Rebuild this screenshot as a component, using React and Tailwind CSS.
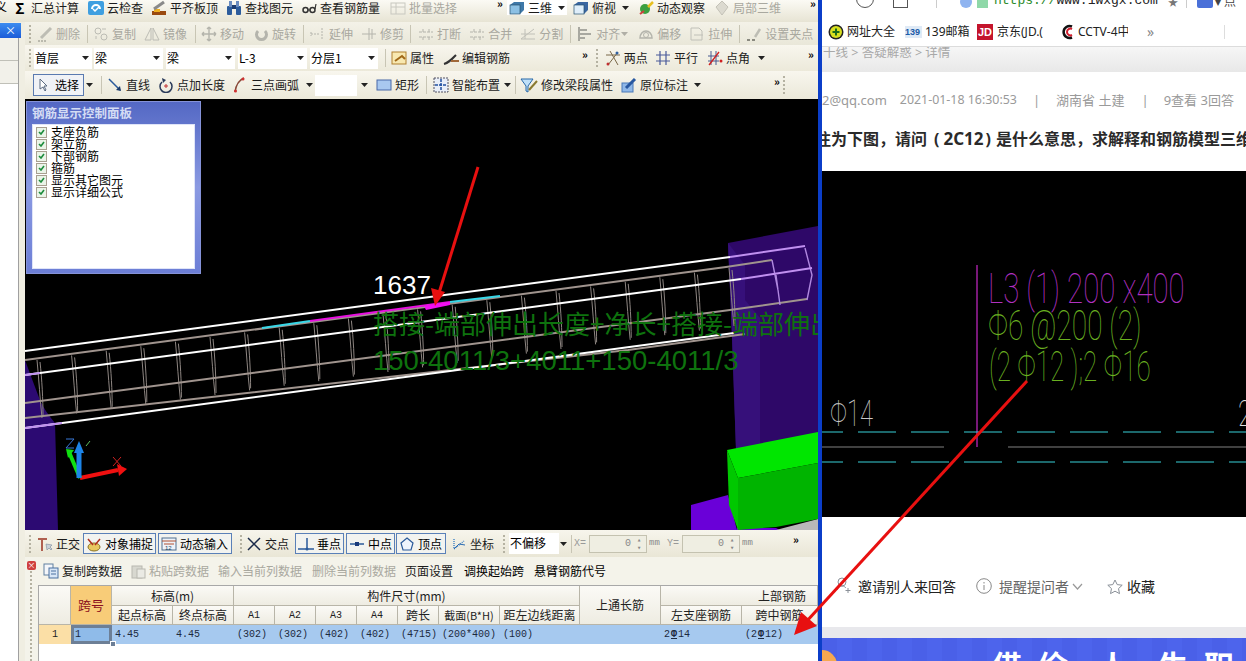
import React from "react";

const S = ({ children, w = 16, h = 16, v = "0 0 16 16" }) => (
  <svg width={w} height={h} viewBox={v} className="shrink-0" fill="none">{children}</svg>
);
const Caret = ({ c = "" }) => (
  <svg width="7" height="4" viewBox="0 0 7 4" className={"shrink-0 " + c}><path d="M0 0h7L3.5 4z" fill="#222" /></svg>
);
const Grip = ({ c = "" }) => (
  <div className={"w-[3px] h-[18px] shrink-0 border-l-2 border-dotted border-[#b5b2a2] " + c} />
);
const Sep = ({ c = "" }) => <div className={"w-px h-[18px] shrink-0 bg-[#c8c5b4] " + c} />;
const More = ({ c = "" }) => <span className={"shrink-0 font-bold text-[11px] leading-none tracking-[-1px] " + c}>»</span>;
const T = ({ i, t, c = "", off }) => (
  <div className={"flex items-center gap-[3px] shrink-0 " + (off ? "text-[#a9a89f] " : "text-[#1b1b1b] ") + c}>
    {i}
    <span className="leading-[16px] whitespace-nowrap">{t}</span>
  </div>
);
const Combo = ({ t, c = "" }) => (
  <div className={"h-[21px] bg-white flex items-center justify-between pl-[1px] pr-[3px] shrink-0 " + c}>
    <span>{t}</span><Caret />
  </div>
);

const G = "#8a8a80";
const Icons = {
  sum: <span className="w-[16px] text-center font-bold text-[15px] leading-[16px] text-black">Σ</span>,
  cloud: <S><rect x="0" y="1" width="16" height="14" rx="2" fill="#3f9fe0" /><path d="M4 9a3 3 0 0 1 8 0" stroke="#fff" strokeWidth="2" /><path d="M5 9l2 2 4-4" stroke="#fff" strokeWidth="1.5" /></S>,
  flat: <S><rect x="1" y="11" width="14" height="4" fill="#9a4a10" /><rect x="3" y="9" width="6" height="3" fill="#f0b020" /><path d="M3 9L13 2" stroke="#8a8a8a" strokeWidth="3" /></S>,
  bino: <S><rect x="1" y="6" width="5" height="9" rx="1" fill="#2c5c9c" /><rect x="10" y="6" width="5" height="9" rx="1" fill="#2c5c9c" /><rect x="3" y="1" width="3" height="6" fill="#6a8cc0" /><rect x="10" y="1" width="3" height="6" fill="#6a8cc0" /><rect x="6" y="5" width="4" height="4" fill="#1c3c70" /></S>,
  glass: <S><circle cx="4.5" cy="10" r="2.5" stroke="#333" strokeWidth="1.5" /><circle cx="11.5" cy="10" r="2.5" stroke="#333" strokeWidth="1.5" /><path d="M7 10h2M14 9l1-5" stroke="#333" strokeWidth="1.2" /></S>,
  batch: <S><rect x="1" y="3" width="14" height="11" stroke="#c8c8c0" /><path d="M1 7h14M6 3v11" stroke="#c8c8c0" /></S>,
  cube: <S><path d="M1 5l4-3h10v8l-4 4H1z" fill="#3e78a8" /><rect x="1" y="5" width="10" height="9" fill="#8cc0e4" stroke="#26506e" strokeWidth=".7" /></S>,
  top: <S><path d="M1 5l4-3h10v8l-4 4H1z" fill="#3a66a0" /><rect x="1" y="5" width="10" height="9" fill="#dfeefa" stroke="#26506e" strokeWidth=".7" /></S>,
  orbit: <S><circle cx="7" cy="9" r="5" fill="#3ca040" /><path d="M10 7l5-5" stroke="#e8c020" strokeWidth="2.5" /><path d="M2 14l4-3" stroke="#d04040" strokeWidth="2" /></S>,
  local: <S><path d="M8 1l6 6-6 8-6-8z" fill="#dcdad0" stroke="#c4c2b8" /></S>,
  del: <S><path d="M4 12L14 2" stroke="#bdbdb4" strokeWidth="3" /><path d="M1 15h8" stroke={G} strokeDasharray="2 1" /></S>,
  copy: <S><circle cx="5" cy="5" r="3" stroke="#bcbcb4" /><circle cx="11" cy="11" r="3" stroke="#bcbcb4" /><path d="M9 3h4M3 10v3" stroke="#bcbcb4" /></S>,
  mirror: <S><path d="M7 2L1 14h6zM9 2l6 12H9z" stroke="#bcbcb4" /></S>,
  move: <S><path d="M8 1v14M1 8h14M8 1l-2 2M8 1l2 2M8 15l-2-2M8 15l2-2M1 8l2-2M1 8l2 2M15 8l-2-2M15 8l-2 2" stroke="#b4b4ac" strokeWidth="1.4" /></S>,
  rot: <S><path d="M12 5a5 5 0 1 1-7 0" stroke="#b4b4ac" strokeWidth="3" /></S>,
  ext: <S><path d="M1 8h8M12 2v12M1 6v4" stroke="#b4b4ac" strokeDasharray="2 1" /></S>,
  trim: <S><path d="M1 8h14M8 2v12M11 3v10" stroke="#b4b4ac" /></S>,
  brk: <S><path d="M1 6h14M1 11h14M5 3v3M11 3v3M5 11v3M11 11v3" stroke="#b4b4ac" strokeDasharray="3 1" /></S>,
  split: <S><path d="M1 13L14 3M1 8h14M1 13h14M5 3v10" stroke="#c0c0b8" /></S>,
  align: <S><path d="M2 1v14M2 4h8M2 8h12M2 12h6" stroke="#a8a8a0" strokeWidth="2" /></S>,
  off2: <S><path d="M2 12a6 7 0 1 1 12 0z" stroke="#b4b4ac" strokeWidth="1.5" /><circle cx="8" cy="9" r="2.5" stroke="#b4b4ac" /></S>,
  str: <S><path d="M2 2h8l3 3v9H2z" stroke="#c0c0b8" /><path d="M5 9h9" stroke="#c0c0b8" /></S>,
  grip: <S><path d="M9 11l5-8" stroke="#bdbdb4" strokeWidth="2.5" /><path d="M1 14h3M6 14h3" stroke={G} strokeWidth="2" /></S>,
  prop: <S><rect x="1" y="2" width="14" height="12" fill="#f8e8b0" stroke="#b08030" /><path d="M4 11l7-5 3 3" stroke="#a06818" strokeWidth="2" /></S>,
  edit: <S><path d="M1 14c4-1 6-3 12-9" stroke="#333" strokeWidth="2" /><path d="M8 11h8" stroke="#a06838" strokeWidth="2" /></S>,
  two: <S><path d="M1 5l14 0M5 1l8 14M3 15L13 2" stroke="#7a6848" /><circle cx="12" cy="3" r="1.5" fill="#3060a0" /><circle cx="3" cy="14" r="1.5" fill="#c03030" /></S>,
  par: <S><path d="M1 5h14M1 11h14M5 1v14M11 1v14" stroke="#4a5a9a" strokeWidth="1.2" /></S>,
  ang: <S><path d="M1 6h11M1 11h11M4 1v14M9 1v14" stroke="#485a90" /><path d="M2 15L12 2" stroke="#d02020" strokeWidth="1.3" /><circle cx="14" cy="11" r="1.5" fill="#d02020" /></S>,
  sel: <S><path d="M4 2v10l3-2 2 4 1-1-2-4h3z" fill="#fff" stroke="#5a6a80" /></S>,
  line: <S><path d="M2 2l11 11" stroke="#2a5a9a" strokeWidth="1.5" /><path d="M14 14l-5-1 4-4z" fill="#1a3a6a" /></S>,
  addlen: <S><path d="M12 5a6 6 0 1 1-8 0" stroke="#2a3a5a" strokeWidth="1.5" /><path d="M4 1l4 2-3 3z" fill="#2a3a5a" /><path d="M8 7v4M6 9h4" stroke="#c03030" /></S>,
  arc: <S w={11} v="0 0 11 16"><path d="M1 15C2 8 5 3 10 1" stroke="#884838" strokeWidth="1.5" /><circle cx="1.5" cy="14" r="1.5" fill="#d03030" /><circle cx="9" cy="2" r="1.5" fill="#d03030" /></S>,
  rect: <S><rect x="1" y="3" width="14" height="10" fill="#a8c8f0" stroke="#4868a8" /></S>,
  smart: <S><rect x="1" y="1" width="14" height="14" fill="#e8eef8" stroke="#505060" strokeDasharray="2 1" /><path d="M8 2v12M2 8h12" stroke="#2050a0" strokeWidth="1.5" strokeDasharray="3 1" /></S>,
  modseg: <S w={18} v="0 0 18 16"><path d="M1 2h12L8 9v6l-2-1V9z" fill="#bfe0f8" stroke="#2868a8" /><path d="M9 13l8-9" stroke="#8a7a30" strokeWidth="2" /></S>,
  orig: <S><rect x="1" y="6" width="11" height="9" fill="#90b8e8" stroke="#4878b8" /><path d="M5 11l9-9" stroke="#2858a0" strokeWidth="3" /></S>,
  ortho: <S><path d="M1 3h9M5 3v12" stroke="#b06050" strokeWidth="2" /><path d="M9 8l1 6 2-2 2 2 1-1-2-2 2-2z" fill="#c8d0d8" stroke="#7a8a9a" strokeWidth=".6" /></S>,
  snap: <S><ellipse cx="8" cy="11" rx="6" ry="4" fill="#e8c860" stroke="#887020" /><path d="M2 3l5 6M14 3L9 9" stroke="#b03020" strokeWidth="1.5" /></S>,
  dyn: <S><rect x="1" y="2" width="14" height="12" fill="#eef2f8" stroke="#507090" /><path d="M1 5h14M3 8h10" stroke="#b05030" /><text x="4" y="14" fontSize="6" fill="#204060" fontFamily="Liberation Sans">12</text></S>,
  cross: <S><path d="M2 2l12 12M14 2L2 14" stroke="#1a2a4a" strokeWidth="1.5" /></S>,
  perp: <S><path d="M0 13h16M9 2v11" stroke="#2a5a9a" strokeWidth="1.5" /><circle cx="9" cy="13" r="1.5" fill="#2a5a9a" /></S>,
  mid: <S><path d="M1 8h14" stroke="#2a5a9a" strokeWidth="1.5" /><rect x="6" y="6" width="4" height="4" fill="#1a3a7a" /></S>,
  vert: <S><path d="M8 2l6 5-2 7H4L2 7z" stroke="#2a5a9a" strokeWidth="1.2" fill="#eef4fc" /></S>,
  coord: <S><path d="M3 3v10l10-8" stroke="#4888c8" strokeDasharray="1 1" strokeWidth="1.5" /><path d="M3 13l5-5 6 1" stroke="#2a6ab0" /></S>,
  copyd: <S><rect x="1" y="1" width="9" height="11" fill="#f4f6fa" stroke="#6080a0" /><rect x="6" y="5" width="9" height="10" fill="#d8e6f6" stroke="#4a70a0" /><path d="M8 8h5M8 11h5" stroke="#4a70a0" /></S>,
  paste: <S><rect x="2" y="3" width="10" height="12" fill="#d8d8d0" stroke="#b8b8b0" /><rect x="7" y="6" width="8" height="9" fill="#eaeae4" stroke="#b8b8b0" /></S>,
  none: <span className="w-[16px]" />,
};

const Dim = ({ c = "", children }) => <div className={"flex items-center justify-center border-r border-b border-[#b8b5a8] bg-gradient-to-b from-[#fbfaf6] to-[#eeece2] text-[#222] text-[12px] " + c}>{children}</div>;
const Cell = ({ c = "", children }) => <div className={"flex items-center pl-[3px] font-['Liberation_Mono','Noto_Sans_CJK_SC',monospace] text-[10px] text-[#1c2a40] bg-[#a6c9ef] whitespace-nowrap " + c}>{children}</div>;
const Phi = () => <span className="underline mx-[1px] font-bold">Φ</span>;

const stirrups = Array.from({ length: 21 }, (_, i) => {
  const x = 37 + 34.6 * i;
  const y = 360 - 4.6 * i;
  return `M${x} ${y}C${x + 2} ${y + 20} ${x + 3} ${y + 40} ${x + 5} ${y + 58}M${x + 3} ${y + 2}C${x + 5} ${y + 20} ${x + 6} ${y + 40} ${x + 6} ${y + 56}`;
});

function Canvas() {
  return (
    <svg viewBox="25 99 793 431" width="793" height="431" className="block absolute inset-0">
      <rect x="25" y="99" width="793" height="431" fill="#000" />
      <path d="M25 360Q36 390 40 400T55 423L58 530H25z" fill="#2c0a72" />
      <path d="M728 243L818 226V440L736 450L732 337z" fill="#2e0868" />
      <path d="M745 300L760 318L760 445L736 450L732 337L728 243L745 265z" fill="#36107a" />
      <path d="M691 505L728 495L737 530H691z" fill="#6a00d8" />
      <path d="M737 528L776 528L780 530H737z" fill="#6a00d8" />
      <path d="M776 530L818 519V530z" fill="#b8b8b8" />
      <path d="M727 450L818 432V463L738 478z" fill="#00e600" />
      <path d="M738 478L818 463V519L776 527L738 530z" fill="#00b400" />
      <path d="M727 450L738 478V530L729 505z" fill="#00c800" />
      <path d={stirrups.join("")} stroke="#8e8682" strokeWidth="1" fill="none" />
      <path d="M25 360L726 267L772 260M25 403L730 310L807 299M25 418L628 350L745 334" stroke="#a0948e" strokeWidth="2" fill="none" />
      <path d="M772 260L778 290M776 275L780 305M805 248L812 275L807 300" stroke="#b088e0" strokeWidth="1.4" fill="none" />
      <path d="M25 351L730 257" stroke="#fff" strokeWidth="2" />
      <path d="M730 257L805 246" stroke="#c090f0" strokeWidth="2" />
      <path d="M25 375L741 279" stroke="#fff" strokeWidth="2" />
      <path d="M741 279L812 268" stroke="#c090f0" strokeWidth="2" />
      <path d="M25 428L734 333" stroke="#fff" strokeWidth="2" />
      <path d="M25 375L40 373M25 428L62 423" stroke="#c090f0" strokeWidth="2" />
      <path d="M262 328L310 321M450 302L500 296" stroke="#38d8e8" strokeWidth="2" />
      <path d="M310 321L450 302" stroke="#e810e0" strokeWidth="2" />
      <path d="M424 306L450 302L450 305L426 310z" fill="#f010f0" />
      <path d="M80 478L118 470" stroke="#f01010" strokeWidth="4" />
      <path d="M117 464L127 469L119 476z" fill="#f01010" />
      <path d="M80 478L69 452" stroke="#10e010" strokeWidth="4" />
      <path d="M66 449L74 450L68 458z" fill="#10e010" />
      <path d="M79 478L79 450" stroke="#1c84e8" strokeWidth="5" />
      <path d="M79 441L84 453H74z" fill="#1c84e8" />
      <path d="M66 439H74L66 448H74" stroke="#3878d8" fill="none" />
      <path d="M113 457L121 466M121 457L113 466" stroke="#d02020" fill="none" />
      <path d="M86 446L90 441" stroke="#60c060" fill="none" />
    </svg>
  );
}

export default function App() {
  return (
    <div className="w-[1246px] h-[661px] flex overflow-hidden relative bg-white font-['Noto_Sans_CJK_SC','Noto_Sans',sans-serif] text-[12px]">
      {/* Left application */}
      <div className="w-[818px] shrink-0 flex flex-col bg-[#f0eee2]">
        <div className="h-[22px] shrink-0 flex items-start bg-gradient-to-b from-[#fbfaf4] to-[#e7e4d4] overflow-hidden">
          <span className="w-[12px] shrink-0 -ml-[5px] mr-[5px] leading-[14px]">义</span>
          <T i={Icons.sum} t="汇总计算" />
          <T i={Icons.cloud} t="云检查" c="ml-[9px]" />
          <T i={Icons.flat} t="平齐板顶" c="ml-[8px]" />
          <T i={Icons.bino} t="查找图元" c="ml-[8px]" />
          <T i={Icons.glass} t="查看钢筋量" c="ml-[8px]" />
          <T i={Icons.batch} t="批量选择" c="ml-[10px]" off />
          <More c="ml-[40px] mt-[-2px]" />
          <div className="ml-[5px] w-[60px] h-[15px] bg-white flex items-center pl-[2px] shrink-0">
            <T i={Icons.cube} t="三维" />
            <Caret c="ml-[6px]" />
          </div>
          <T i={Icons.top} t="俯视" c="ml-[6px]" />
          <Caret c="ml-[6px] mt-[6px]" />
          <T i={Icons.orbit} t="动态观察" c="ml-[9px]" />
          <T i={Icons.local} t="局部三维" c="ml-[9px]" off />
          <More c="ml-[29px] mt-[-2px]" />
        </div>
        <div className="flex flex-1 min-h-0">
          {/* Left side strip */}
          <div className="w-[25px] shrink-0 flex flex-col">
            <div className="h-[15px] mt-px w-[21px] bg-gradient-to-b from-[#3d8cf0] to-[#1c5cd8] text-white text-[11px] leading-[15px] text-right pr-[5px]">×</div>
            <div className="w-[19px] flex-1 bg-white border-r border-[#a0a0a0] flex flex-col">
              <div className="h-[23px] bg-[#f2f1ea] border-b border-[#c0c0b8]" />
              <div className="h-[23px] bg-[#f2f1ea] border-b border-[#c0c0b8]" />
            </div>
          </div>
          {/* Main */}
          <div className="w-[793px] flex flex-col">
            <div className="h-[23px] shrink-0 flex items-center bg-gradient-to-b from-[#f4f2e8] to-[#e9e7d9]">
              <Grip c="ml-[4px]" />
              <T i={Icons.del} t="删除" c="ml-[5px]" off />
              <Sep c="ml-[7px]" />
              <T i={Icons.copy} t="复制" c="ml-[5px]" off />
              <T i={Icons.mirror} t="镜像" c="ml-[8px]" off />
              <Sep c="ml-[8px]" />
              <T i={Icons.move} t="移动" c="ml-[5px]" off />
              <T i={Icons.rot} t="旋转" c="ml-[9px]" off />
              <Sep c="ml-[7px]" />
              <T i={Icons.ext} t="延伸" c="ml-[6px]" off />
              <T i={Icons.trim} t="修剪" c="ml-[8px]" off />
              <Sep c="ml-[6px]" />
              <T i={Icons.brk} t="打断" c="ml-[7px]" off />
              <T i={Icons.brk} t="合并" c="ml-[8px]" off />
              <T i={Icons.split} t="分割" c="ml-[8px]" off />
              <Sep c="ml-[7px]" />
              <T i={Icons.align} t="对齐" c="ml-[6px]" off />
              <Caret c="ml-px opacity-30" />
              <T i={Icons.off2} t="偏移" c="ml-[10px]" off />
              <T i={Icons.str} t="拉伸" c="ml-[8px]" off />
              <Sep c="ml-[7px]" />
              <T i={Icons.grip} t="设置夹点" c="ml-[6px]" off />
            </div>
            <div className="h-[26px] shrink-0 flex items-center bg-gradient-to-b from-[#f8f6ee] to-[#ece9da]">
              <Grip c="ml-[4px]" />
              <Combo t="首层" c="ml-[2px] w-[58px]" />
              <Combo t="梁" c="ml-[2px] w-[69px]" />
              <Combo t="梁" c="ml-[3px] w-[69px]" />
              <Combo t="L-3" c="ml-[3px] w-[69px]" />
              <Combo t="分层1" c="ml-[3px] w-[68px]" />
              <Sep c="ml-[7px]" />
              <T i={Icons.prop} t="属性" c="ml-[5px]" />
              <T i={Icons.edit} t="编辑钢筋" c="ml-[9px]" />
              <More c="ml-[72px] mt-[-8px]" />
              <Grip c="ml-[9px]" />
              <T i={Icons.two} t="两点" c="ml-[6px]" />
              <T i={Icons.par} t="平行" c="ml-[7px]" />
              <T i={Icons.ang} t="点角" c="ml-[9px]" />
              <Caret c="ml-[8px]" />
              <More c="ml-[43px] mt-[-8px]" />
            </div>
            <div className="h-[28px] shrink-0 flex items-center bg-gradient-to-b from-[#f8f6ee] to-[#ebe8d9]">
              <div className="ml-[8px] w-[51px] h-[22px] flex items-center gap-[3px] border border-[#5a7ab0] bg-[#f0f2f6] pl-[2px] shrink-0">
                {Icons.sel}<span>选择</span>
              </div>
              <Caret c="ml-[2px]" />
              <Sep c="ml-[8px]" />
              <T i={Icons.line} t="直线" c="ml-[5px]" />
              <T i={Icons.addlen} t="点加长度" c="ml-[8px]" />
              <T i={Icons.arc} t="三点画弧" c="ml-[9px] !gap-[6px]" />
              <Caret c="ml-[7px]" />
              <div className="ml-[2px] w-[42px] h-[21px] bg-white shrink-0" />
              <Caret c="ml-[4px]" />
              <T i={Icons.rect} t="矩形" c="ml-[8px]" />
              <Sep c="ml-[7px]" />
              <T i={Icons.smart} t="智能布置" c="ml-[6px]" />
              <Caret c="ml-[4px]" />
              <Sep c="ml-[4px]" />
              <T i={Icons.modseg} t="修改梁段属性" c="ml-[4px]" />
              <T i={Icons.orig} t="原位标注" c="ml-[8px]" />
              <Caret c="ml-[6px]" />
              <More c="ml-[73px] mt-[-8px]" />
              <Grip c="ml-[4px]" />
            </div>
            {/* 3D view */}
            <div className="h-[431px] shrink-0 relative overflow-hidden bg-black">
              <Canvas />
              <div className="absolute left-[1px] top-[2px] w-[175px] h-[173px] bg-gradient-to-b from-[#5468c4] via-[#8b9ae2] to-[#6c7ed6] border border-[#8592d8] px-[5px]">
                <div className="h-[22px] text-[12.5px] leading-[22px] font-bold text-[#d4dcf4] whitespace-nowrap">钢筋显示控制面板</div>
                <div className="h-[145px] bg-white border border-[#dfe4f8] pl-[3px] pt-[1px]">
                  {["支座负筋", "架立筋", "下部钢筋", "箍筋", "显示其它图元", "显示详细公式"].map((t) => (
                    <div key={t} className="h-[12px] flex items-center gap-[4px] text-black leading-[12px] whitespace-nowrap">
                      <span className="w-[11px] h-[11px] border border-[#a8a090] bg-[#eaf4e8] flex items-center justify-center shrink-0">
                        <svg width="7" height="6" viewBox="0 0 7 6"><path d="M1 3l2 2 3-4" stroke="#1c8c3c" strokeWidth="1.6" fill="none" /></svg>
                      </span>
                      <span>{t}</span>
                    </div>
                  ))}
                </div>
              </div>
              <div className="absolute left-[348px] top-[170px] text-[26px] leading-[32px] text-white font-['Liberation_Sans',sans-serif]">1637</div>
              <div className="absolute left-[348px] top-[204px] text-[26px] leading-[40px] text-[#0e720e] whitespace-nowrap">搭接-端部伸出长度+净长+搭接-端部伸出</div>
              <div className="absolute left-[348px] top-[242px] text-[27.500px] leading-[40px] text-[#0e720e] whitespace-nowrap font-['Liberation_Sans',sans-serif]">150-4011/3+4011+150-4011/3</div>
            </div>
            {/* Snap bar */}
            <div className="h-[27px] shrink-0 flex items-center bg-gradient-to-b from-[#f7f5ec] to-[#e9e6d6]">
              <Grip c="ml-[4px]" />
              <T i={Icons.ortho} t="正交" c="ml-[5px]" />
              <div className="ml-[3px] w-[73px] h-[21px] flex items-center gap-[3px] pl-[2px] border border-[#5a80b8] bg-[#f2f3f0] shrink-0">{Icons.snap}<span>对象捕捉</span></div>
              <div className="ml-[2px] w-[74px] h-[21px] flex items-center gap-[3px] pl-[2px] border border-[#5a80b8] bg-[#f2f3f0] shrink-0">{Icons.dyn}<span>动态输入</span></div>
              <Grip c="ml-[8px]" />
              <T i={Icons.cross} t="交点" c="ml-[3px]" />
              <div className="ml-[6px] w-[49px] h-[21px] flex items-center gap-[3px] pl-[2px] border border-[#5a80b8] bg-[#f2f3f0] shrink-0">{Icons.perp}<span>垂点</span></div>
              <div className="ml-[2px] w-[49px] h-[21px] flex items-center gap-[3px] pl-[2px] border border-[#5a80b8] bg-[#f2f3f0] shrink-0">{Icons.mid}<span>中点</span></div>
              <div className="ml-px w-[50px] h-[21px] flex items-center gap-[3px] pl-[2px] border border-[#5a80b8] bg-[#f2f3f0] shrink-0">{Icons.vert}<span>顶点</span></div>
              <T i={Icons.coord} t="坐标" c="ml-[5px]" />
              <Grip c="ml-[9px]" />
              <div className="ml-[3px] w-[50px] h-[21px] bg-white pl-px leading-[20px] shrink-0">不偏移</div>
              <Caret c="ml-px" />
              <Sep c="ml-[4px]" />
              <span className="ml-[2px] w-[14px] shrink-0 font-['Liberation_Mono',monospace] text-[10px] text-[#999]">X=</span>
              <div className="ml-px w-[58px] h-[18px] shrink-0 border border-[#c4c2b0] bg-[#efeee2] flex items-center justify-end pr-[3px] gap-[6px] font-['Liberation_Mono',monospace] text-[10px] text-[#888]">0<span className="text-[7px] leading-[8px] w-[6px]">▴<br />▾</span></div>
              <span className="ml-[2px] w-[16px] shrink-0 font-['Liberation_Mono',monospace] text-[9px] text-[#888]">mm</span>
              <span className="ml-[2px] w-[14px] shrink-0 font-['Liberation_Mono',monospace] text-[10px] text-[#999]">Y=</span>
              <div className="ml-px w-[58px] h-[18px] shrink-0 border border-[#c4c2b0] bg-[#efeee2] flex items-center justify-end pr-[3px] gap-[6px] font-['Liberation_Mono',monospace] text-[10px] text-[#888]">0<span className="text-[7px] leading-[8px] w-[6px]">▴<br />▾</span></div>
              <span className="ml-[2px] w-[16px] shrink-0 font-['Liberation_Mono',monospace] text-[9px] text-[#888]">mm</span>
              <More c="ml-[35px] mt-[-8px]" />
            </div>
            {/* Data panel */}
            <div className="flex-1 min-h-0 flex flex-col relative bg-[#f4f3ea]">
              <div className="absolute left-[2px] top-[4px] w-[9px] h-[9px] rounded-[2px] bg-[#d04040] text-white text-[8px] leading-[8px] text-center">×</div>
              <div className="absolute left-[5px] top-[14px] bottom-0 border-l-2 border-dotted border-[#b5b2a2]" />
              <div className="h-[28px] shrink-0 flex items-center">
                <T i={Icons.copyd} t="复制跨数据" c="ml-[18px]" />
                <T i={Icons.paste} t="粘贴跨数据" c="ml-[8px]" off />
                <T i={Icons.none} t="输入当前列数据" c="ml-[-10px]" off />
                <T i={Icons.none} t="删除当前列数据" c="ml-[-9px]" off />
                <T i={Icons.none} t="页面设置" c="ml-[-10px]" />
                <span className="ml-[11px] shrink-0">调换起始跨</span>
                <span className="ml-[10px] shrink-0">悬臂钢筋代号</span>
              </div>
              <div className="flex-1 ml-[13px] bg-white border-t border-l border-[#a8a8a8] overflow-hidden">
                <div className="grid relative grid-cols-[32px_41px_61px_61px_41px_41px_41px_41px_41px_61px_80px_81px_81px_76px] grid-rows-[20px_19px_19px]">
                  <Dim c="row-span-2" />
                  <Dim c="row-span-2 !bg-none !bg-[#f8cc78] !text-[#8c1020] text-[13px]">跨号</Dim>
                  <Dim c="col-span-2">标高(m)</Dim>
                  <Dim c="col-span-7">构件尺寸(mm)</Dim>
                  <Dim c="row-span-2">上通长筋</Dim>
                  <Dim c="col-span-2 !justify-end pr-[11px]">上部钢筋</Dim>
                  <Dim>起点标高</Dim>
                  <Dim>终点标高</Dim>
                  <Dim c="font-['Liberation_Mono',monospace] !text-[10px]">A1</Dim>
                  <Dim c="font-['Liberation_Mono',monospace] !text-[10px]">A2</Dim>
                  <Dim c="font-['Liberation_Mono',monospace] !text-[10px]">A3</Dim>
                  <Dim c="font-['Liberation_Mono',monospace] !text-[10px]">A4</Dim>
                  <Dim>跨长</Dim>
                  <Dim c="!text-[11px] whitespace-nowrap">截面(B*H)</Dim>
                  <Dim>距左边线距离</Dim>
                  <Dim>左支座钢筋</Dim>
                  <Dim>跨中钢筋</Dim>
                  <div className="bg-[#fbdfa6] flex items-center justify-center font-['Liberation_Mono',monospace] text-[10px] text-[#222]">1</div>
                  <div className="border-[3px] border-[#6d7f96] bg-[#8fbbe9] flex items-center pl-[1px] font-['Liberation_Mono',monospace] text-[10px] text-[#1c2a40]">1</div>
                  <Cell>4.45</Cell>
                  <Cell>4.45</Cell>
                  <Cell>(302)</Cell>
                  <Cell>(302)</Cell>
                  <Cell>(402)</Cell>
                  <Cell>(402)</Cell>
                  <Cell>(4715)</Cell>
                  <Cell>(200*400)</Cell>
                  <Cell>(100)</Cell>
                  <Cell />
                  <Cell>2<Phi />14</Cell>
                  <Cell>(2<Phi />12)</Cell>
                  <div className="absolute left-[71px] top-[55px] w-[4px] h-[4px] bg-[#6d7f96] border border-white box-content" />
                </div>
              </div>
            </div>
          </div>
        </div>
      </div>
      <div className="w-[4px] shrink-0 bg-[#0b3ec9]" />
      {/* Right browser */}
      <div className="w-[424px] shrink-0 flex flex-col overflow-hidden bg-white font-['Noto_Sans','Noto_Sans_CJK_SC',sans-serif]">
        <div className="h-[17px] shrink-0 flex items-end pb-[8px] overflow-hidden border-b border-transparent">
          <span className="ml-[34px] w-[18px] h-[18px] rounded-full border border-[#555] shrink-0" />
          <span className="ml-[19px] w-[15px] h-[15px] border border-[#555] shrink-0" />
          <span className="ml-[28px] w-px h-[15px] bg-[#ccc] shrink-0" />
          <span className="ml-[23px] w-[12px] h-[12px] rounded-full bg-[#8fb4f0] shrink-0" />
          <span className="ml-[5px] w-[11px] h-[12px] bg-[#8fd8a8] shrink-0" />
          <span className="ml-[6px] font-['Liberation_Mono',monospace] text-[13px] leading-[14px] whitespace-nowrap shrink-0 w-[164px] overflow-hidden"><span className="text-[#2a8a2a]">https://</span><span className="text-[#222]">www.1wxgx.com/(</span></span>
          <span className="ml-[10px] text-[#777] text-[10px] leading-[12px] shrink-0">★</span>
          <span className="ml-[8px] w-px h-[15px] bg-[#ccc] shrink-0" />
          <span className="ml-[10px] w-[16px] h-[10px] rounded-[2px] bg-[#4a70d8] shrink-0" />
          <span className="ml-[2px] shrink-0 text-[12px] leading-[12px] text-[#444]">▾ 点</span>
        </div>
        <div className="h-[30px] shrink-0 flex items-center border-b border-[#dcdcdc] text-[#222] text-[12px] whitespace-nowrap">
          <svg width="16" height="16" viewBox="0 0 16 16" className="ml-[6px] shrink-0"><circle cx="8" cy="8" r="7.5" fill="#222" /><circle cx="8" cy="8" r="6" fill="#d8e020" /><path d="M8 4.5v7M4.5 8h7" stroke="#1a6a1a" strokeWidth="2" /></svg>
          <span className="ml-[3px] w-[48px] shrink-0">网址大全</span>
          <svg width="17" height="14" viewBox="0 0 17 14" className="ml-[10px] shrink-0"><rect y="1" width="17" height="12" fill="#dfeaf6" /><text x="0" y="9.5" fontSize="9" fontWeight="700" fill="#1c5ca8" fontFamily="Liberation Sans">139</text></svg>
          <span className="ml-[3px] w-[43px] shrink-0">139邮箱</span>
          <span className="ml-[9px] w-[16px] h-[16px] bg-[#c4142c] text-white text-[11px] leading-[16px] text-center font-bold font-['Liberation_Sans',sans-serif] shrink-0">JD</span>
          <span className="ml-[4px] w-[49px] overflow-hidden shrink-0">京东(JD.(</span>
          <svg width="14" height="16" viewBox="0 0 14 16" className="ml-[14px] shrink-0"><path d="M12 2.5A6 6 0 1 0 12 13.5" stroke="#111" strokeWidth="2.5" fill="none" /><path d="M12 5A3.4 3.4 0 1 0 12 11" stroke="#d01c2c" strokeWidth="2" fill="none" /></svg>
          <span className="ml-[4px] w-[50px] overflow-hidden shrink-0">CCTV-4中</span>
          <span className="ml-[19px] text-[#888] text-[14px] shrink-0">»</span>
          <span className="ml-[70px] w-px h-[14px] bg-[#ddd] shrink-0" />
        </div>
        <div className="h-[25px] shrink-0 bg-gradient-to-b from-[#f6f6f6] to-[#e8e8e8] overflow-hidden text-[12.500px] text-[#a8a8a8] leading-[11px] pl-px whitespace-nowrap">十线 &gt; 答疑解惑 &gt; 详情</div>
        <div className="h-[99px] shrink-0 overflow-hidden">
          <div className="h-[37px] flex items-end text-[13px] leading-[18px] text-[#9a9a9a] whitespace-nowrap">
            <span className="shrink-0">2@qq.com</span>
            <span className="ml-[13px] shrink-0 text-[12.400px]">2021-01-18 16:30:53</span>
            <span className="ml-[16px] shrink-0">|</span>
            <span className="ml-[16px] shrink-0">湖南省 土建</span>
            <span className="ml-[17px] shrink-0">|</span>
            <span className="ml-[15px] shrink-0">9查看 3回答</span>
          </div>
          <div className="mt-[18px] -ml-[7px] flex items-center text-[16px] leading-[24px] font-bold text-[#2a2a2a] whitespace-nowrap">
            <span>注为下图，请问</span>
            <span className="ml-[7px]">(</span>
            <span className="ml-[4px] text-[17px]">2C12</span>
            <span className="ml-[2px]">)</span>
            <span className="ml-[5px]">是什么意思，求解释和钢筋模型三维</span>
          </div>
        </div>
        <div className="h-[346px] shrink-0 bg-black relative overflow-hidden font-['Roboto','Noto_Sans',sans-serif] font-thin">
          <svg width="424" height="346" viewBox="822 171 424 346" className="absolute inset-0">
            <path d="M977 265V447" stroke="#a020a0" strokeWidth="1.5" />
            <path d="M805 432H1246M805 462H1246" stroke="#38d0d8" strokeDasharray="38 15" />
            <path d="M822 447H944M1008 447H1246" stroke="#808080" />
          </svg>
          <div className="absolute left-[166px] top-[96px] text-[42px] leading-[44px] text-[#b030c0] whitespace-nowrap origin-left scale-x-[0.7]">L3 (1) 200 x400</div>
          <div className="absolute left-[166px] top-[133px] text-[42px] leading-[44px] text-[#6ab020] whitespace-nowrap origin-left scale-x-[0.67]">Φ6 @200 (2)</div>
          <div className="absolute left-[167px] top-[174px] text-[42px] leading-[44px] text-[#6ab020] whitespace-nowrap origin-left scale-x-[0.62]">(2 Φ12 );2 Φ16</div>
          <div className="absolute left-[8px] top-[222px] text-[36px] leading-[42px] text-[#c8c8c8] origin-left scale-x-[0.66]">Φ14</div>
          <div className="absolute left-[416px] top-[222px] text-[36px] leading-[42px] text-[#e0e0e0] origin-left scale-x-[0.72]">2</div>
        </div>
        <div className="h-[110px] shrink-0 pt-[59px] flex items-start text-[14px] leading-[20px] whitespace-nowrap font-['Noto_Sans_CJK_SC',sans-serif]">
          <svg width="15" height="18" viewBox="0 0 15 18" className="ml-[14px] shrink-0" fill="none"><circle cx="6" cy="6" r="4" stroke="#8a9098" /><path d="M1 14c1-3 3-4 5-4s3 1 4 2" stroke="#8a9098" /><path d="M12 12v5M9.5 14.5h5" stroke="#8a9098" /></svg>
          <span className="ml-[7px] text-[#222] shrink-0">邀请别人来回答</span>
          <svg width="16" height="16" viewBox="0 0 16 16" className="ml-[20px] mt-[2px] shrink-0" fill="none"><circle cx="8" cy="8" r="7.3" stroke="#888" /><path d="M8 7v5M8 4v1.5" stroke="#888" /></svg>
          <span className="ml-[7px] text-[#666] shrink-0">提醒提问者</span>
          <svg width="11" height="7" viewBox="0 0 11 7" className="ml-[3px] mt-[7px] shrink-0" fill="none"><path d="M1 1l4.5 5L10 1" stroke="#999" strokeWidth="1.2" /></svg>
          <svg width="16" height="16" viewBox="0 0 16 16" className="ml-[24px] mt-[3px] shrink-0" fill="none"><path d="M8 1l2.2 4.6 5 .6-3.7 3.4 1 5L8 12.2 3.500 14.600l1-5L.8 6.200l5-.6z" stroke="#8a9098" /></svg>
          <span className="ml-[4px] text-[#222] shrink-0">收藏</span>
        </div>
        <div className="h-[11px] shrink-0 bg-[#e8e8ec]" />
        <div className="flex-1 relative overflow-hidden bg-[#4a60e8] bg-[repeating-linear-gradient(90deg,#4a60e8_0,#4a60e8_15px,#4d64ec_15px,#4d64ec_30px)]">
          <div className="absolute left-0 top-[12px] w-[15px] h-[15px] rounded-tr-full bg-[#f5a850]" />
          <div className="absolute left-[170px] top-[6px] flex gap-[16px] text-[30px] leading-[40px] font-bold text-white whitespace-nowrap font-['Noto_Sans_CJK_SC',sans-serif]">
            <span>借</span><span>俭</span><span className="ml-[14px]">人</span><span className="ml-[14px]">生</span><span>职</span><span>上</span>
          </div>
        </div>
      </div>
      {/* Annotation arrows */}
      <svg width="1246" height="661" viewBox="0 0 1246 661" className="absolute inset-0 pointer-events-none">
        <path d="M478 167L439 293" stroke="#e81010" strokeWidth="3" />
        <path d="M435 306L431 288L445 292z" fill="#e81010" />
        <path d="M1027 381L806 622" stroke="#e81010" strokeWidth="3" />
        <path d="M794 635L801 612L817 626z" fill="#e81010" />
      </svg>
    </div>
  );
}
